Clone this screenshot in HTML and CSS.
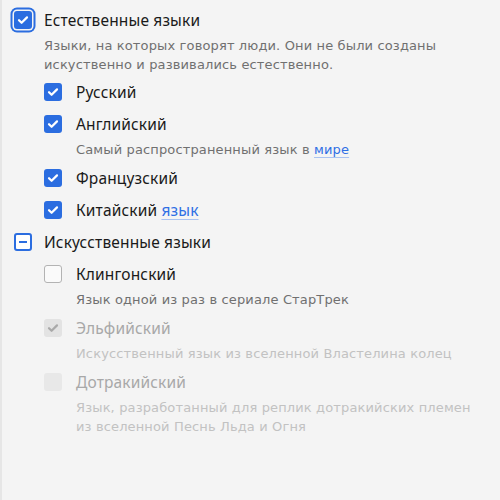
FILE: index.html
```html
<!DOCTYPE html>
<html lang="ru">
<head>
<meta charset="utf-8">
<link rel="stylesheet" href="styles.css">
</head>
<body>
<div class="panel">
  <div class="row top">
    <span class="cb checked focus"><svg viewBox="0 0 18 18"><path d="M5 9.2l2.6 2.6L13 6.4" /></svg></span>
    <div class="text">
      <div class="label">Естественные языки</div>
      <div class="desc">Языки, на которых говорят люди. Они не были созданы искуственно и развивались естественно.</div>
    </div>
  </div>
  <div class="children">
    <div class="row">
      <span class="cb checked"><svg viewBox="0 0 18 18"><path d="M5 9.2l2.6 2.6L13 6.4" /></svg></span>
      <div class="text"><div class="label">Русский</div></div>
    </div>
    <div class="row">
      <span class="cb checked"><svg viewBox="0 0 18 18"><path d="M5 9.2l2.6 2.6L13 6.4" /></svg></span>
      <div class="text">
        <div class="label">Английский</div>
        <div class="desc">Самый распространенный язык в <a class="link">мире</a></div>
      </div>
    </div>
    <div class="row">
      <span class="cb checked"><svg viewBox="0 0 18 18"><path d="M5 9.2l2.6 2.6L13 6.4" /></svg></span>
      <div class="text"><div class="label">Французский</div></div>
    </div>
    <div class="row">
      <span class="cb checked"><svg viewBox="0 0 18 18"><path d="M5 9.2l2.6 2.6L13 6.4" /></svg></span>
      <div class="text"><div class="label">Китайский <a class="link">язык</a></div></div>
    </div>
  </div>
  <div class="row top">
    <span class="cb indet"><span class="dash"></span></span>
    <div class="text"><div class="label">Искусственные языки</div></div>
  </div>
  <div class="children">
    <div class="row">
      <span class="cb"></span>
      <div class="text">
        <div class="label">Клингонский</div>
        <div class="desc">Язык одной из раз в сериале СтарТрек</div>
      </div>
    </div>
    <div class="row disabled">
      <span class="cb dis-checked"><svg viewBox="0 0 18 18"><path d="M5 9.2l2.6 2.6L13 6.4" /></svg></span>
      <div class="text">
        <div class="label">Эльфийский</div>
        <div class="desc">Искусственный язык из вселенной Властелина колец</div>
      </div>
    </div>
    <div class="row disabled">
      <span class="cb dis"></span>
      <div class="text">
        <div class="label">Дотракийский</div>
        <div class="desc">Язык, разработанный для реплик дотракийских племен из вселенной Песнь Льда и Огня</div>
      </div>
    </div>
  </div>
</div>
</body>
</html>
```
FILE: styles.css
```css
html, body {
  margin: 0;
  padding: 0;
  background: #f4f4f4;
}
.panel {
  box-sizing: border-box;
  width: 500px;
  height: 500px;
  border-left: 2px solid #e6e6e6;
  padding: 4px 24px 0 10px;
  font-family: "Noto Sans", sans-serif;
}
.row {
  display: flex;
  align-items: flex-start;
}
.children {
  padding-left: 32px;
}
.cb {
  flex: none;
  box-sizing: border-box;
  width: 18px;
  height: 18px;
  margin-top: 7px;
  margin-right: 14px;
  border-radius: 3px;
  border: 1.5px solid #b3b3b3;
  background: #fafafa;
  display: flex;
  align-items: center;
  justify-content: center;
  position: relative;
}
.top .cb {
  margin-left: 2px;
  margin-right: 12px;
}
.cb svg {
  width: 18px;
  height: 18px;
  fill: none;
  stroke: #fff;
  stroke-width: 2.2;
  stroke-linecap: round;
  stroke-linejoin: round;
}
.cb.checked {
  background: #2b6de0;
  border: none;
}
.cb.focus {
  box-shadow: 0 0 0 1.5px #f4f4f4, 0 0 0 3.5px #2b6de0;
}
.cb.indet {
  border: 2px solid #2b6de0;
  background: #fff;
}
.cb .dash {
  width: 8px;
  height: 2px;
  background: #2b6de0;
}
.cb.dis-checked {
  background: #e3e3e3;
  border: none;
}
.cb.dis-checked svg {
  stroke: #a9a9a9;
}
.cb.dis {
  background: #e8e8e8;
  border: none;
}
.text {
  flex: 1;
}
.label {
  font-size: 15.5px;
  letter-spacing: 0.15px;
  line-height: 32px;
  color: #1a1a1a;
}
.desc {
  font-family: "DejaVu Sans", sans-serif;
  font-size: 13px;
  letter-spacing: 0.14px;
  line-height: 19px;
  color: #707070;
  padding-bottom: 3px;
}
.top .desc {
  padding-bottom: 2px;
}
.link {
  color: #2f6fe4;
  text-decoration: underline;
  text-decoration-color: #a9c3f2;
  text-underline-offset: 3px;
}
.disabled .label {
  color: #a8a8a8;
}
.disabled .desc {
  color: #c2c2c2;
}
```
